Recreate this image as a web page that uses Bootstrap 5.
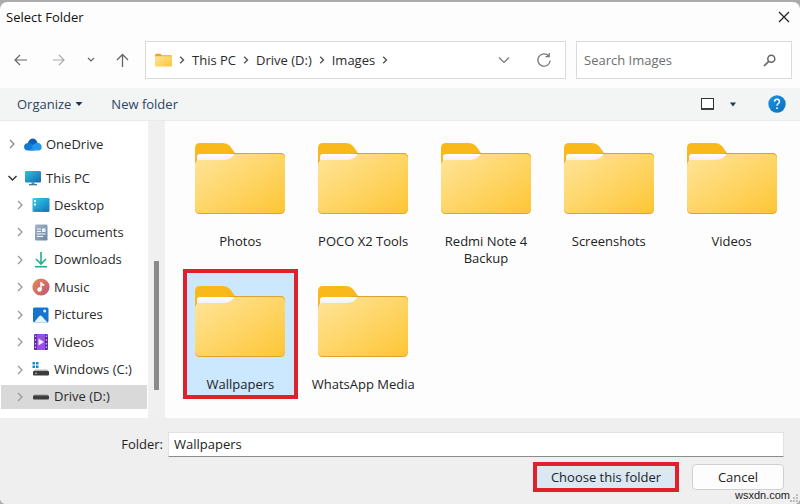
<!DOCTYPE html>
<html lang="en">
<head>
<meta charset="utf-8">
<meta name="viewport" content="width=device-width, initial-scale=1">
<title>Select Folder</title>
<link href="https://cdn.jsdelivr.net/npm/bootstrap@5.3.0/dist/css/bootstrap.min.css" rel="stylesheet">
<style>
  body { font-family: "Open Sans", "Noto Sans", sans-serif; font-size: 13px; line-height: 17px; color: #1f1f1f; background: #a9a9a9; }
  svg { display: block; flex: none; }
  a { color: inherit; text-decoration: none; }
  .dialog-window { border-top: 2px solid #ababab; background: #ababab; }
  .dialog-body { background: #fdfdfd; border-radius: 7px 7px 6px 6px; }
  .title-bar { height: 39px; padding: 0 10px 9px 6px; color: #111; }
  .plain-btn { border: 0; background: none; padding: 0; color: inherit; display: block; }
  .address-row { height: 38px; gap: 10px; padding: 0 8px 0 13px; color: #666; }
  .nav-arrows { width: 122px; padding-right: 5px; }
  .field-box { border: 1px solid #dadada; background: #fff; }
  .path-box { padding: 0 13px 0 9px; color: #2b2b2b; }
  .path-list { gap: 6px; }
  .search-box { width: 216px; padding: 0 15px 0 7px; }
  .search-box input { border: 0; outline: 0; padding: 0; background: none; min-width: 0; color: #555; }
  .search-box input::placeholder { color: #6e6e6e; opacity: 1; }
  .command-bar { height: 33px; margin-top: 9px; padding: 0 14px 0 17px; background: #f3f5f5; border-bottom: 1px solid #e9ebeb; color: #2d4461; }
  .tree-pane { width: 148px; padding: 11px 1px 9px 1px; background: #fff; }
  .tree-pane ul { margin: 0; padding: 3px 0 0; list-style: none; }
  .tree-row { gap: 7px; height: 24px; color: #2a2a2a; }
  .tree-top { gap: 4px; padding-left: 6px; }
  .tree-top-space { margin-bottom: 10px; }
  .tree-child { padding-left: 14px; gap: 4px; }
  .tree-row .arrow { margin-right: 3px; width: 10px; }
  .tree-row.selected { background: #d9d9d9; }
  .scroll-track { width: 17px; padding: 140px 6px 28px; background: #f0f0f0; }
  .scroll-thumb { background: #8a8a8a; }
  .file-pane { padding: 5px 7px 0 14px; background: #fdfdfd; }
  .file-grid { display: grid; grid-template-columns: repeat(5, minmax(0, 1fr)); grid-auto-rows: 143px; justify-items: center; align-items: start; }
  .file-item { width: 115px; min-height: 130px; padding: 13px 0 2px; border: 4px solid transparent; background: none; color: #222; text-align: center; display: flex; flex-direction: column; align-items: center; gap: 19px; white-space: nowrap; }
  .file-item.selected { border-color: #e0202b; background: #cce8ff; }
  .footer-bar { background: #efefef; padding: 14px 16px 12px; border-radius: 0 0 6px 6px; }
  .folder-label { width: 152px; padding-right: 5px; text-align: right; }
  .folder-input { height: 25px; border: 1px solid #e2e2e2; border-bottom: 1px solid #8c8c8c; background: #fff; padding: 0 5px 2px; outline: 0; color: #222; min-width: 0; }
  .action-row { margin-top: 5px; gap: 13px; }
  .btn-choose { width: 146px; height: 30px; padding: 0; border: 4px solid #e0202b; border-radius: 0; background: #d9e8f3; color: #222; font-size: 13px; line-height: 17px; }
  .btn-cancel { width: 92px; height: 26px; padding: 0; border: 1px solid #d0d0d0; border-radius: 4px; background: #fdfdfd; color: #222; font-size: 13px; line-height: 17px; }
  .site-tag { right: 10px; bottom: 2px; font: 11px/13px "Liberation Sans", Arial, sans-serif; color: #222; }
  .size-grip { right: 1px; bottom: 1px; }
</style>
<script src="https://cdn.jsdelivr.net/npm/bootstrap@5.3.0/dist/js/bootstrap.bundle.min.js"></script>
</head>
<body>
<svg width="0" height="0" class="position-absolute" aria-hidden="true">
  <defs>
    <linearGradient id="gFront" x1="0" y1="0" x2="1" y2="1"><stop offset="0" stop-color="#ffe59b"/><stop offset="1" stop-color="#fdc635"/></linearGradient>
    <linearGradient id="gPaper" x1="0" y1="0" x2="0" y2="1"><stop offset="0" stop-color="#fff"/><stop offset="1" stop-color="#dfdfdf"/></linearGradient>
    <linearGradient id="gScreen" x1="0" y1="0" x2="1" y2="1"><stop offset="0" stop-color="#2fc3d6"/><stop offset="1" stop-color="#1467b5"/></linearGradient>
    <linearGradient id="gDesk" x1="0" y1="0" x2="1" y2="1"><stop offset="0" stop-color="#35cfe8"/><stop offset="1" stop-color="#1173bd"/></linearGradient>
    <linearGradient id="gDoc" x1="0" y1="0" x2="1" y2="1"><stop offset="0" stop-color="#a6b7cb"/><stop offset="1" stop-color="#6c84a3"/></linearGradient>
    <linearGradient id="gMusic" x1="0" y1="0" x2="1" y2="1"><stop offset="0" stop-color="#ec8a55"/><stop offset="1" stop-color="#bb5577"/></linearGradient>
    <linearGradient id="gHelp" x1="0" y1="0" x2="1" y2="1"><stop offset="0" stop-color="#1b93e0"/><stop offset="1" stop-color="#0b6fbd"/></linearGradient>
    <symbol id="folder" viewBox="0 0 90 71">
      <path d="M0 18V5Q0 0 5 0H28Q32 0 35 3L40 10H85Q90 10 90 15V40H0Z" fill="#fab91b"/>
      <path d="M0 14V66Q0 71 5 71H85Q90 71 90 66V15Q90 10 85 10H40Z" fill="#e0a22e"/>
      <path d="M0 18V12H39L37 15Z" fill="#fab91b"/>
      <path d="M2 25V14Q2 11 5 11H40L35 18H2Z" fill="url(#gPaper)"/>
      <path d="M0 22Q0 17 5 17H30Q34 17 37 14L39 12Q40 11 42 11H85Q90 11 90 16V65Q90 70 85 70H5Q0 70 0 65Z" fill="url(#gFront)"/>
    </symbol>
    <symbol id="chev" viewBox="0 0 10 12"><path d="M3 2L7 6L3 10" fill="none" stroke="currentColor" stroke-width="1.3"/></symbol>
    <symbol id="chevPath" viewBox="0 0 8 12"><path d="M2.2 2.7L5.5 6L2.2 9.3" fill="none" stroke="#555" stroke-width="1.4"/></symbol>
  </defs>
</svg>

<div class="dialog-window min-vh-100 d-flex flex-column">
<main class="dialog-body flex-fill d-flex flex-column position-relative">
  <header class="title-bar d-flex align-items-center justify-content-between">
    <span>Select Folder</span>
    <button class="plain-btn" type="button" aria-label="Close"><svg width="12" height="12" viewBox="0 0 12 12"><path d="M1 1L11 11M11 1L1 11" stroke="#222" stroke-width="1.3"/></svg></button>
  </header>

  <div class="address-row d-flex align-items-stretch">
    <div class="nav-arrows d-flex align-items-center justify-content-between">
      <button class="plain-btn" type="button" aria-label="Back"><svg width="15" height="14" viewBox="0 0 15 14"><path d="M14 7H2M7 2L2 7L7 12" fill="none" stroke="#666" stroke-width="1.2"/></svg></button>
      <button class="plain-btn ms-1" type="button" aria-label="Forward"><svg width="14" height="14" viewBox="0 0 14 14"><path d="M1 7H12M7 2L12 7L7 12" fill="none" stroke="#aaa" stroke-width="1.2"/></svg></button>
      <button class="plain-btn" type="button" aria-label="Recent locations"><svg width="8" height="8" viewBox="0 0 8 8"><path d="M1 2L4 5L7 2" fill="none" stroke="#666" stroke-width="1.2"/></svg></button>
      <button class="plain-btn" type="button" aria-label="Up"><svg width="15" height="15" viewBox="0 0 15 15"><path d="M7.500 14V1.500M2 7L7.500 1.500L13 7" fill="none" stroke="#666" stroke-width="1.3"/></svg></button>
    </div>
    <nav class="field-box path-box flex-fill d-flex align-items-center" aria-label="Path">
      <div class="path-list d-flex align-items-center flex-fill">
        <svg width="17" height="14" viewBox="0 0 16 13"><path d="M0 2Q0 .5 1.500 .5H5L6.500 2H15Q16 2 16 3V6H0Z" fill="#e9a820"/><rect y="3" width="16" height="9.500" rx="1" fill="url(#gFront)"/></svg>
        <svg width="8" height="12"><use href="#chevPath"/></svg>
        <a href="#">This PC</a>
        <svg width="8" height="12"><use href="#chevPath"/></svg>
        <a href="#">Drive (D:)</a>
        <svg width="8" height="12"><use href="#chevPath"/></svg>
        <a href="#">Images</a>
        <svg width="8" height="12"><use href="#chevPath"/></svg>
      </div>
      <button class="plain-btn me-4" type="button" aria-label="Previous locations"><svg width="14" height="8" viewBox="0 0 14 8"><path d="M1 1.500L6 6.500L11 1.500" fill="none" stroke="#777" stroke-width="1.2"/></svg></button>
      <button class="plain-btn" type="button" aria-label="Refresh"><svg width="16" height="16" viewBox="0 0 16 16"><path d="M14.200 8.500A6.200 6.200 0 1 1 12.600 3.800M13.200 1V4.700H9.500" fill="none" stroke="#777" stroke-width="1.3"/></svg></button>
    </nav>
    <div class="field-box search-box d-flex align-items-center">
      <input class="flex-fill" type="search" placeholder="Search Images" aria-label="Search Images">
      <svg width="13" height="13" viewBox="0 0 13 13"><circle cx="8.300" cy="4.700" r="3.500" fill="none" stroke="#666" stroke-width="1.500"/><path d="M5.700 7.300L1 12" stroke="#666" stroke-width="1.700"/></svg>
    </div>
  </div>

  <div class="command-bar d-flex align-items-center">
    <button class="plain-btn d-flex align-items-center gap-1" type="button">Organize <svg width="8" height="6" viewBox="0 0 8 6"><path d="M.5 1H7.500L4 5Z" fill="#1f3757"/></svg></button>
    <button class="plain-btn ms-4 ps-1" type="button">New folder</button>
    <button class="plain-btn ms-auto d-flex align-items-center gap-3" type="button" aria-label="Change view">
      <svg width="13" height="12" viewBox="0 0 13 12"><rect x=".5" y=".5" width="12" height="10" fill="#fff" stroke="#333"/><path d="M0 10.500H13V12H0Z" fill="#444"/></svg>
      <svg width="6" height="5" viewBox="0 0 6 5"><path d="M0 .5H6L3 4.500Z" fill="#1f3757"/></svg>
    </button>
    <button class="plain-btn ms-4 ps-2" type="button" aria-label="Help"><svg width="18" height="18" viewBox="0 0 18 18"><circle cx="9" cy="9" r="8.700" fill="url(#gHelp)"/><path d="M6.500 6.700Q6.600 4.200 9 4.200Q11.500 4.200 11.500 6.500Q11.500 7.700 10.200 8.600Q9 9.400 9 10.800" fill="none" stroke="#fff" stroke-width="1.400"/><circle cx="9" cy="13.200" r=".9" fill="#fff"/></svg></button>
  </div>

  <div class="d-flex flex-fill">
    <nav class="tree-pane d-flex flex-column flex-shrink-0" aria-label="Folders">
      <div class="tree-row tree-top tree-top-space d-flex align-items-center">
        <svg class="arrow" width="10" height="12" color="#888"><use href="#chev"/></svg>
        <svg width="18" height="13" viewBox="0 0 18 13"><path d="M4 9Q3 4 6 1.500Q9 -.5 12 2Q13 3 13.500 5L8 9Z" fill="#0c5fb5"/><path d="M4 12.500Q0 12.500 0 8.800Q.2 5 4.500 5Q7 5 9 7L14 10L10 12.500Z" fill="#1179d0"/><path d="M7 8L11 5.500Q13 4 15.500 5.200Q18 6.500 17.800 9.500Q17.300 12.500 14.500 12.500H4.500Q8 11 9 9Z" fill="#2597ea"/></svg>
        <a href="#">OneDrive</a>
      </div>
      <div class="tree-row tree-top d-flex align-items-center">
        <svg class="arrow" width="10" height="12" viewBox="0 0 10 12" color="#333"><path d="M1.500 4L5.500 8L9.500 4" fill="none" stroke="currentColor" stroke-width="1.400"/></svg>
        <svg width="18" height="15" viewBox="0 0 18 15"><rect x="1" width="16" height="11.500" rx="1" fill="url(#gScreen)"/><path d="M7.500 11.500H10.500V13H7.500Z" fill="#5a86a2"/><path d="M5 13H13V14.300H5Z" fill="#477591"/></svg>
        <a href="#">This PC</a>
      </div>
      <ul class="flex-fill d-flex flex-column justify-content-between">
        <li class="tree-row tree-child d-flex align-items-center"><svg class="arrow" width="10" height="12" color="#999"><use href="#chev"/></svg>
          <svg width="18" height="14" viewBox="0 0 18 14"><rect x=".5" width="17" height="14" rx="1.300" fill="url(#gDesk)"/><path d="M2 2H4V4H2ZM2 5.500H4V7.500H2Z" fill="#d9fbff"/><path d="M3 12H8M10 12H16" stroke="#1a7cab"/></svg><a href="#">Desktop</a></li>
        <li class="tree-row tree-child d-flex align-items-center"><svg class="arrow" width="10" height="12" color="#999"><use href="#chev"/></svg>
          <svg width="18" height="17" viewBox="0 0 18 17"><rect x="3" y=".5" width="12.500" height="16" rx="1.200" fill="url(#gDoc)"/><path d="M5 5H9M5 7.500H9M5 10H13.500M5 12.500H11" stroke="#f4f8fc" stroke-width="1.200"/><path d="M10 4.400H13.500V8H10Z" fill="#e9f0f7"/></svg><a href="#">Documents</a></li>
        <li class="tree-row tree-child d-flex align-items-center"><svg class="arrow" width="10" height="12" color="#999"><use href="#chev"/></svg>
          <svg width="18" height="17" viewBox="0 0 18 17"><path d="M9 1V12.500M4 8L9 13L14 8" fill="none" stroke="#22b08b" stroke-width="1.600"/><path d="M3 15.700H15" stroke="#22b08b" stroke-width="1.600"/></svg><a href="#">Downloads</a></li>
        <li class="tree-row tree-child d-flex align-items-center"><svg class="arrow" width="10" height="12" color="#999"><use href="#chev"/></svg>
          <svg width="18" height="18" viewBox="0 0 18 18"><circle cx="9" cy="9" r="8.600" fill="url(#gMusic)"/><circle cx="7.500" cy="11.500" r="2.200" fill="#fff"/><path d="M8.300 4H9.700Q10 6 12.300 6.300V8Q10.500 8 9.700 7.300V11.500H8.300Z" fill="#fff"/></svg><a href="#">Music</a></li>
        <li class="tree-row tree-child d-flex align-items-center"><svg class="arrow" width="10" height="12" color="#999"><use href="#chev"/></svg>
          <svg width="18" height="16" viewBox="0 0 18 16"><rect x="1" y=".5" width="15.500" height="15" rx="1.500" fill="#1474cf"/><path d="M2 15.500L7.200 9.200Q8.500 8 9.800 9.200L15.500 15.500Z" fill="#e5f6ff"/><circle cx="12.700" cy="4" r="1.500" fill="#dff3ff"/></svg><a href="#">Pictures</a></li>
        <li class="tree-row tree-child d-flex align-items-center"><svg class="arrow" width="10" height="12" color="#999"><use href="#chev"/></svg>
          <svg width="18" height="16" viewBox="0 0 18 16"><rect x="2" width="14" height="16" rx="1.500" fill="#9650e6"/><path d="M2 1.500Q2 0 3.500 0H5V16H3.500Q2 16 2 14.500ZM13 0H14.500Q16 0 16 1.500V14.500Q16 16 14.500 16H13Z" fill="#5c2a9c"/><path d="M3.500 1.500V15M14.500 1.500V15" stroke="#d7b8ff" stroke-width="1.300" stroke-dasharray="1.500 2.200"/><path d="M6.500 4.500L12 8L6.500 11.500Z" fill="#f3e9ff"/></svg><a href="#">Videos</a></li>
        <li class="tree-row tree-child d-flex align-items-center"><svg class="arrow" width="10" height="12" color="#999"><use href="#chev"/></svg>
          <svg width="18" height="18" viewBox="0 0 18 18"><path d="M.5 1H3V3.500H.5ZM4 1H6.500V3.500H4ZM.5 4.500H3V7H.5ZM4 4.500H6.500V7H4Z" fill="#1587d2"/><path d="M3 8.500H15L17 10.500H1Z" fill="#b5b5b5"/><rect x="1" y="10" width="16" height="4.500" rx="1" fill="#3d3d3d"/><path d="M3 12.300H5" stroke="#9fd49f"/></svg><a href="#">Windows (C:)</a></li>
        <li class="tree-row tree-child selected d-flex align-items-center"><svg class="arrow" width="10" height="12" color="#999"><use href="#chev"/></svg>
          <svg width="18" height="8" viewBox="0 0 18 8"><path d="M3 1.500H15L17 3H1Z" fill="#999"/><rect x="1" y="2.500" width="16" height="4" rx="1" fill="#3d3d3d"/></svg><a href="#" aria-current="true">Drive (D:)</a></li>
      </ul>
    </nav>
    <div class="scroll-track d-flex flex-shrink-0" aria-hidden="true"><div class="scroll-thumb flex-fill"></div></div>
    <section class="file-pane flex-fill" aria-label="Images">
      <div class="file-grid">
        <button class="file-item" type="button"><svg width="90" height="71"><use href="#folder"/></svg><span>Photos</span></button>
        <button class="file-item" type="button"><svg width="90" height="71"><use href="#folder"/></svg><span>POCO X2 Tools</span></button>
        <button class="file-item" type="button"><svg width="90" height="71"><use href="#folder"/></svg><span>Redmi Note 4<br>Backup</span></button>
        <button class="file-item" type="button"><svg width="90" height="71"><use href="#folder"/></svg><span>Screenshots</span></button>
        <button class="file-item" type="button"><svg width="90" height="71"><use href="#folder"/></svg><span>Videos</span></button>
        <button class="file-item selected" type="button" aria-pressed="true"><svg width="90" height="71"><use href="#folder"/></svg><span>Wallpapers</span></button>
        <button class="file-item" type="button"><svg width="90" height="71"><use href="#folder"/></svg><span>WhatsApp Media</span></button>
      </div>
    </section>
  </div>

  <footer class="footer-bar">
    <div class="d-flex align-items-center">
      <label class="folder-label" for="folderName">Folder:</label>
      <input class="folder-input flex-fill" id="folderName" type="text" value="Wallpapers">
    </div>
    <div class="action-row d-flex justify-content-end align-items-center">
      <button class="btn btn-choose" type="button">Choose this folder</button>
      <button class="btn btn-cancel" type="button">Cancel</button>
    </div>
  </footer>
  <span class="site-tag position-absolute">wsxdn.com</span>
  <svg class="size-grip position-absolute" width="9" height="9" viewBox="0 0 9 9" aria-hidden="true"><path d="M6 0H8V2H6ZM3 3H5V5H3ZM6 3H8V5H6ZM0 6H2V8H0ZM3 6H5V8H3ZM6 6H8V8H6Z" fill="#bdbdbd"/></svg>
</main>
</div>
</body>
</html>
